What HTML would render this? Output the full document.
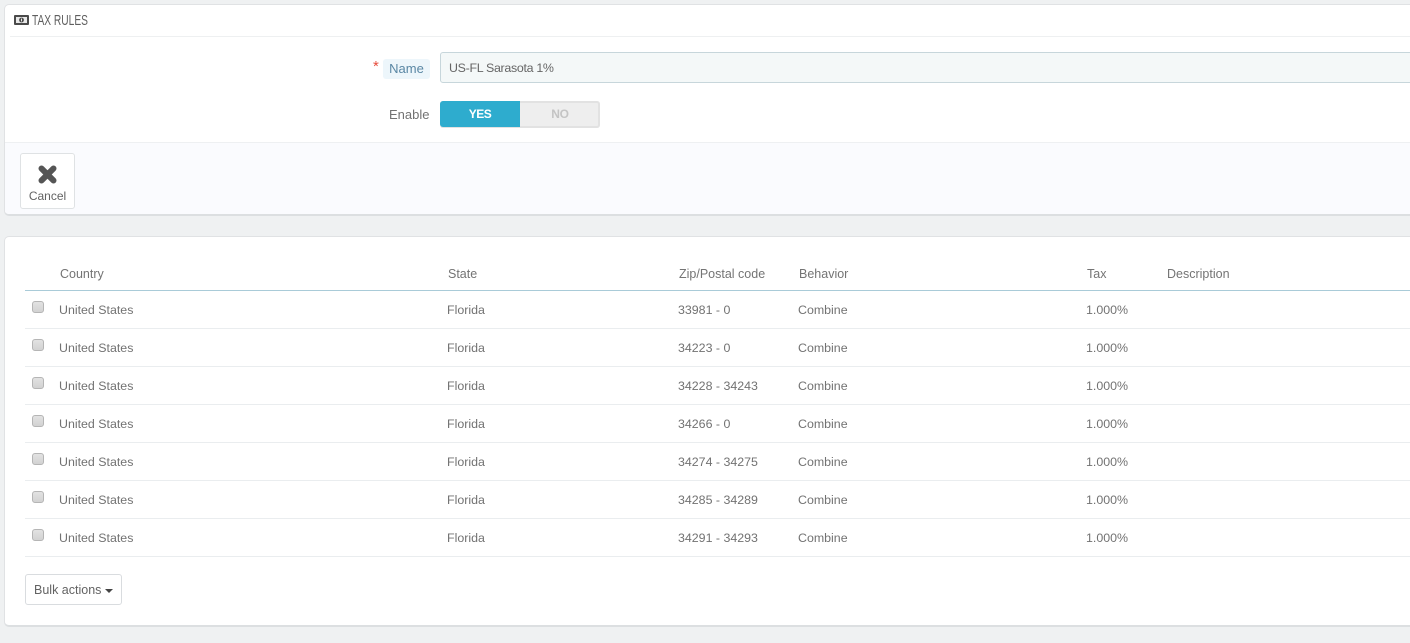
<!DOCTYPE html>
<html>
<head>
<meta charset="utf-8">
<style>
html,body{margin:0;padding:0;width:1410px;height:643px;overflow:hidden;background:#eff1f2;font-family:"Liberation Sans",sans-serif;font-size:12.4px;color:#727272}
.a{position:absolute;white-space:nowrap}
.panel{position:absolute;left:4px;width:1420px;background:#fff;border:1px solid #e0e2e4;border-bottom:2px solid #dcdfe1;border-radius:5px;box-sizing:border-box}
.t{line-height:16px;height:16px}
.h{color:#747474;font-size:12.5px}
.line{position:absolute;left:25px;width:1385px;height:1px;background:#eaedef}
.cb{position:absolute;left:32px;width:12px;height:12px;background:linear-gradient(#e2e2e2,#d2d2d2);border:1px solid #b5b5b5;border-radius:3px;box-sizing:border-box}
</style>
</head>
<body>
<div class="panel" style="top:4px;height:212px;overflow:hidden">
  <div style="position:absolute;left:0;top:137px;right:0;bottom:0;background:#fafbfe;border-top:1px solid #eef0f2"></div>
</div>
<div class="a" style="left:10px;top:36px;width:1400px;height:1px;background:#eef0f1"></div>
<svg class="a" style="left:14px;top:15px" width="15" height="10" viewBox="0 0 15 10"><rect x="0" y="0" width="15" height="10" rx="1" fill="#4a4a4a"/><rect x="2" y="2" width="11" height="6" fill="#e8e8e8"/><circle cx="7.5" cy="5" r="2.4" fill="#4a4a4a"/><rect x="7" y="3.6" width="1" height="2.8" fill="#e8e8e8"/></svg>
<div class="a t" style="left:32px;top:13px;font-size:15px;color:#5f5f5f;transform:scaleX(.68);transform-origin:left center">TAX RULES</div>

<div class="a" style="left:373px;top:59px;color:#e74c3c;font-size:15px;line-height:16px">*</div>
<div class="a" style="left:383px;top:59px;width:47px;height:20px;background:#edf6fb;border-radius:3px;color:#5a87a4;font-size:13px;line-height:19px;text-align:center">Name</div>
<div class="a" style="left:440px;top:52px;width:980px;height:31px;box-sizing:border-box;background:#f4f8f8;border:1px solid #c7d6db;border-radius:3px;color:#666;font-size:12.4px;letter-spacing:-.3px;line-height:30px;padding-left:8px">US-FL Sarasota 1%</div>

<div class="a t" style="left:389px;top:107px;font-size:13px;color:#727272">Enable</div>
<div class="a" style="left:440px;top:101px;width:160px;height:27px;background:#eeeeee;border-radius:3px;box-shadow:inset 0 0 0 2px #e2e2e2"></div>
<div class="a" style="left:440px;top:101px;width:80px;height:26px;background:#2eacce;border-radius:3px 0 0 3px;color:#fff;font-size:12px;letter-spacing:-.5px;font-weight:bold;line-height:26px;text-align:center">YES</div>
<div class="a" style="left:520px;top:101px;width:80px;height:26px;color:#c4c4c4;font-size:12px;letter-spacing:-.3px;font-weight:bold;line-height:26px;text-align:center">NO</div>

<div class="a" style="left:20px;top:153px;width:55px;height:56px;box-sizing:border-box;background:#fff;border:1px solid #dfe2e4;border-radius:3px"></div>
<svg class="a" style="left:38px;top:165px" width="19" height="19" viewBox="0 0 19 19"><path d="M3.5 3.5 L15.5 15.5 M15.5 3.5 L3.5 15.5" stroke="#555" stroke-width="6" stroke-linecap="round"/></svg>
<div class="a t" style="left:20px;top:188px;width:55px;text-align:center;color:#636363;font-size:12px">Cancel</div>

<div class="panel" style="top:236px;height:391px"></div>

<div class="a t h" style="left:60px;top:266px">Country</div>
<div class="a t h" style="left:448px;top:266px">State</div>
<div class="a t h" style="left:679px;top:266px">Zip/Postal code</div>
<div class="a t h" style="left:799px;top:266px">Behavior</div>
<div class="a t h" style="left:1087px;top:266px">Tax</div>
<div class="a t h" style="left:1167px;top:266px">Description</div>
<div class="line" style="top:290px;background:#a9cbd8"></div>

<div class="cb" style="top:301px"></div><div class="a t" style="left:59px;top:302px">United States</div><div class="a t" style="left:447px;top:302px">Florida</div><div class="a t" style="left:678px;top:302px">33981 - 0</div><div class="a t" style="left:798px;top:302px">Combine</div><div class="a t" style="left:1086px;top:302px">1.000%</div><div class="line" style="top:328px"></div>
<div class="cb" style="top:339px"></div><div class="a t" style="left:59px;top:340px">United States</div><div class="a t" style="left:447px;top:340px">Florida</div><div class="a t" style="left:678px;top:340px">34223 - 0</div><div class="a t" style="left:798px;top:340px">Combine</div><div class="a t" style="left:1086px;top:340px">1.000%</div><div class="line" style="top:366px"></div>
<div class="cb" style="top:377px"></div><div class="a t" style="left:59px;top:378px">United States</div><div class="a t" style="left:447px;top:378px">Florida</div><div class="a t" style="left:678px;top:378px">34228 - 34243</div><div class="a t" style="left:798px;top:378px">Combine</div><div class="a t" style="left:1086px;top:378px">1.000%</div><div class="line" style="top:404px"></div>
<div class="cb" style="top:415px"></div><div class="a t" style="left:59px;top:416px">United States</div><div class="a t" style="left:447px;top:416px">Florida</div><div class="a t" style="left:678px;top:416px">34266 - 0</div><div class="a t" style="left:798px;top:416px">Combine</div><div class="a t" style="left:1086px;top:416px">1.000%</div><div class="line" style="top:442px"></div>
<div class="cb" style="top:453px"></div><div class="a t" style="left:59px;top:454px">United States</div><div class="a t" style="left:447px;top:454px">Florida</div><div class="a t" style="left:678px;top:454px">34274 - 34275</div><div class="a t" style="left:798px;top:454px">Combine</div><div class="a t" style="left:1086px;top:454px">1.000%</div><div class="line" style="top:480px"></div>
<div class="cb" style="top:491px"></div><div class="a t" style="left:59px;top:492px">United States</div><div class="a t" style="left:447px;top:492px">Florida</div><div class="a t" style="left:678px;top:492px">34285 - 34289</div><div class="a t" style="left:798px;top:492px">Combine</div><div class="a t" style="left:1086px;top:492px">1.000%</div><div class="line" style="top:518px"></div>
<div class="cb" style="top:529px"></div><div class="a t" style="left:59px;top:530px">United States</div><div class="a t" style="left:447px;top:530px">Florida</div><div class="a t" style="left:678px;top:530px">34291 - 34293</div><div class="a t" style="left:798px;top:530px">Combine</div><div class="a t" style="left:1086px;top:530px">1.000%</div><div class="line" style="top:556px"></div>

<div class="a" style="left:25px;top:574px;width:97px;height:31px;box-sizing:border-box;background:#fff;border:1px solid #d9dcdf;border-radius:3px"></div>
<div class="a t" style="left:34px;top:582px;color:#636363;font-size:12.5px">Bulk actions</div>
<div class="a" style="left:105px;top:589px;width:0;height:0;border-left:4px solid transparent;border-right:4px solid transparent;border-top:4px solid #444"></div>
</body>
</html>
